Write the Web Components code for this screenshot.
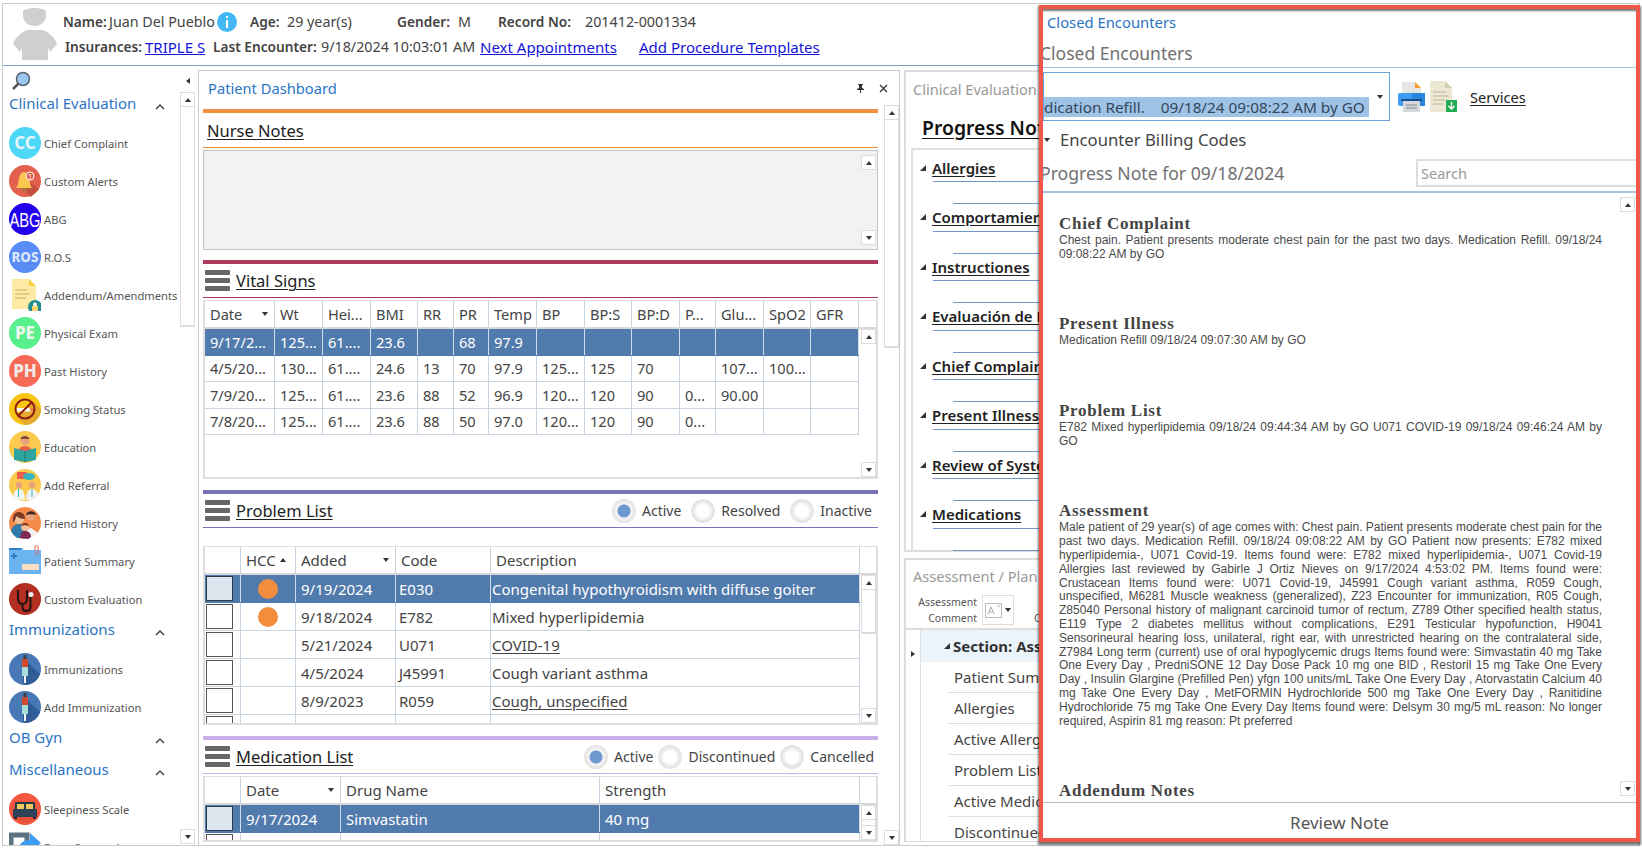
<!DOCTYPE html>
<html>
<head>
<meta charset="utf-8">
<title>Patient Dashboard</title>
<style>
  html, body { margin: 0; height: 848px; overflow: hidden; background: #fff; }
  body { font-family: "Noto Sans", sans-serif; color: #444; }
  svg { display: block; }
</style>
</head>
<body>

<app-shell>
  <patient-header slot="top"></patient-header>

  <side-nav slot="side">
    <nav-group>Clinical Evaluation</nav-group>
    <nav-item>Chief Complaint<svg slot="icon" viewBox="0 0 32 32"><circle cx="16" cy="16" r="16" fill="#4dd8f7"/><text x="16" y="22" text-anchor="middle" font-family="Noto Sans" font-weight="700" font-size="17" fill="#e8f4f6">CC</text></svg></nav-item>
    <nav-item>Custom Alerts<svg slot="icon" viewBox="0 0 32 32"><circle cx="16" cy="16" r="16" fill="#e2604d"/><path d="M16 26l6 6 8-8-8-6z" fill="#c4503f"/><path d="M7 23c2-2 2-5 3-10 1-4 3-6 5-6s4 2 5 6c1 5 1 8 3 10z" fill="#fcc750"/><rect x="13" y="23" width="5" height="3" fill="#a9793a"/><circle cx="21" cy="11" r="4" fill="#e2604d" stroke="#fff"/><text x="21" y="13.500" text-anchor="middle" font-size="7" font-family="Noto Sans" fill="#fff">1</text></svg></nav-item>
    <nav-item>ABG<svg slot="icon" viewBox="0 0 32 32"><circle cx="16" cy="16" r="16" fill="#2200ee"/><text x="16" y="24" text-anchor="middle" font-family="Liberation Sans" font-size="21" textLength="31" lengthAdjust="spacingAndGlyphs" fill="#fff">ABG</text></svg></nav-item>
    <nav-item>R.O.S<svg slot="icon" viewBox="0 0 32 32"><circle cx="16" cy="16" r="16" fill="#5a8cf7"/><text x="16" y="21" text-anchor="middle" font-family="Noto Sans" font-weight="800" font-size="13.500" textLength="27" lengthAdjust="spacingAndGlyphs" fill="#d9e6f5">ROS</text></svg></nav-item>
    <nav-item>Addendum/Amendments<svg slot="icon" viewBox="0 0 32 32"><path d="M3 0h17l7 7v23H3z" fill="#fdeba5"/><path d="M20 0l7 7h-7z" fill="#f9cf45"/><path d="M6 11h12M6 15h15M6 19h11" stroke="#c9b063" stroke-width="1.200"/><circle cx="26" cy="28" r="7" fill="#1f8e8c"/><rect x="23" y="27" width="6" height="7" fill="#f8d36a"/><circle cx="26" cy="25.500" r="2" fill="#fff"/></svg></nav-item>
    <nav-item>Physical Exam<svg slot="icon" viewBox="0 0 32 32"><circle cx="16" cy="16" r="16" fill="#58f08c"/><text x="16" y="22" text-anchor="middle" font-family="Noto Sans" font-weight="800" font-size="17" fill="#eaf6ee">PE</text></svg></nav-item>
    <nav-item>Past History<svg slot="icon" viewBox="0 0 32 32"><circle cx="16" cy="16" r="16" fill="#f76a55"/><text x="16" y="22" text-anchor="middle" font-family="Noto Sans" font-weight="800" font-size="17" fill="#f3e9e6">PH</text></svg></nav-item>
    <nav-item>Smoking Status<svg slot="icon" viewBox="0 0 32 32"><circle cx="16" cy="16" r="16" fill="#f9c513"/><path d="M7 24L24 8l8 8A16 16 0 0 1 16 32z" fill="#e5a92c"/><rect x="6" y="15" width="19" height="3.500" fill="#fff"/><rect x="21" y="15" width="4" height="3.500" fill="#e9893a"/><circle cx="16" cy="16" r="9.500" fill="none" stroke="#8c1c12" stroke-width="2"/><path d="M9 23L23 9" stroke="#8c1c12" stroke-width="2"/></svg></nav-item>
    <nav-item>Education<svg slot="icon" viewBox="0 0 32 32"><circle cx="16" cy="16" r="16" fill="#fbc94e"/><circle cx="16" cy="9.500" r="4.500" fill="#e9a27c"/><path d="M11.500 8c1-4 8-4 9 0z" fill="#7a4a36"/><path d="M7 28c0-9 4-13 9-13s9 4 9 13z" fill="#e8604c"/><path d="M5 17l11 3 11-3v12l-11 2-11-2z" fill="#2fa39d"/><path d="M16 20v11" stroke="#1e7c78"/></svg></nav-item>
    <nav-item>Add Referral<svg slot="icon" viewBox="0 0 32 32"><circle cx="16" cy="16" r="16" fill="#fbc94e"/><rect x="8" y="3" width="10" height="7" rx="1" fill="#e8604c"/><ellipse cx="20" cy="7.500" rx="6" ry="3.500" fill="#36b5c0"/><circle cx="10" cy="16" r="3.200" fill="#e9a27c"/><circle cx="23" cy="16" r="3.200" fill="#e9a27c"/><path d="M4 30c0-7 3-10 6-10s6 3 6 11zM17 31c0-8 3-11 6-11s6 3 6 7l-4 4z" fill="#f1f4f4"/><path d="M9.500 20v8M23 20v8" stroke="#36b5c0"/></svg></nav-item>
    <nav-item>Friend History<svg slot="icon" viewBox="0 0 32 32"><circle cx="16" cy="16" r="16" fill="#f58a4b"/><path d="M16 32c5 0 10-2 13-6l-7-5-6 2z" fill="#f2f2f2"/><path d="M2 24c1-5 5-7 8-7s7 2 8 7v7H8a16 16 0 0 1-6-7z" fill="#2f7cab"/><circle cx="10" cy="12" r="5" fill="#f1bf9a"/><path d="M4 15c-1-8 3-10 6-10s6 2 6 7c-3 0-7-1-9-3 0 3-1 5-3 6z" fill="#7d3a22"/><circle cx="22" cy="9" r="4.500" fill="#e9a27c"/><path d="M17 8c1-5 9-5 10 0-3-1-7-1-10 0z" fill="#3b2a28"/><path d="M11 31c0-5 2-7 5-7s6 2 6 6l-3 2z" fill="#7d2a57"/><circle cx="16" cy="20" r="4" fill="#f1bf9a"/><path d="M12 19c0-4 8-4 8 0-3-1-5-1-8 0z" fill="#7d3a22"/></svg></nav-item>
    <nav-item>Patient Summary<svg slot="icon" viewBox="0 0 32 32"><path d="M0 3h14v2h18v24H0z" fill="#6cb4ef"/><path d="M0 3h12v2H0z" fill="#2f7fc6"/><path d="M5 8v6M2 11h6" stroke="#2f7fc6" stroke-width="2"/><rect x="13" y="19" width="17" height="6" fill="#f8ddc0"/><path d="M26 6V2a1.500 1.500 0 0 1 3 0v6a1.500 1.500 0 0 1-3 0" fill="none" stroke="#e8604c"/></svg></nav-item>
    <nav-item>Custom Evaluation<svg slot="icon" viewBox="0 0 32 32"><circle cx="16" cy="16" r="16" fill="#b22f22"/><path d="M9 7v8c0 4 2 6 4.500 6S18 19 18 15V7" fill="none" stroke="#1f1413" stroke-width="2"/><path d="M13.500 21v3c0 3 2 4 4 4s4-1 4-4V14" fill="none" stroke="#1f1413" stroke-width="2"/><circle cx="22" cy="11.500" r="2.500" fill="#eee"/></svg></nav-item>
    <nav-group>Immunizations</nav-group>
    <nav-item>Immunizations<svg slot="icon" viewBox="0 0 32 32"><circle cx="16" cy="16" r="16" fill="#4878b6"/><path d="M14 5L31 21A16 16 0 0 1 17 32l-3-1z" fill="#2f5c96"/><rect x="14.500" y="2" width="3" height="4" fill="#39403f"/><rect x="13" y="6" width="6" height="8" fill="#d2482f"/><rect x="13" y="14" width="6" height="9" fill="#a9dcd8"/><rect x="15" y="23" width="2" height="7" fill="#f4f4f4"/></svg></nav-item>
    <nav-item>Add Immunization<svg slot="icon" viewBox="0 0 32 32"><circle cx="16" cy="16" r="16" fill="#4878b6"/><path d="M14 5L31 21A16 16 0 0 1 17 32l-3-1z" fill="#2f5c96"/><rect x="14.500" y="2" width="3" height="4" fill="#39403f"/><rect x="13" y="6" width="6" height="8" fill="#d2482f"/><rect x="13" y="14" width="6" height="9" fill="#a9dcd8"/><rect x="15" y="23" width="2" height="7" fill="#f4f4f4"/></svg></nav-item>
    <nav-group>OB Gyn</nav-group>
    <nav-group>Miscellaneous</nav-group>
    <nav-item>Sleepiness Scale<svg slot="icon" viewBox="0 0 32 32"><circle cx="16" cy="16" r="16" fill="#f4593f"/><path d="M1 19h30A16 16 0 0 1 1 19z" fill="#e8503a"/><rect x="6" y="9" width="20" height="9" rx="1" fill="#28394a"/><rect x="8" y="11" width="7" height="5" fill="#f2c75c"/><rect x="17" y="11" width="7" height="5" fill="#f2c75c"/><rect x="4" y="16" width="24" height="8" fill="#2d4257"/><path d="M5 24h3v2H5zM24 24h3v2h-3z" fill="#1b2833"/></svg></nav-item>
    <nav-item>Form Scanned<svg slot="icon" viewBox="0 0 32 32"><rect x="2" y="4" width="16" height="26" fill="none" stroke="#5b7380" stroke-width="5"/><path d="M9 18c2-7 7-9 12-9V2l11 10-11 10v-7c-5 0-8 0-12 3z" fill="#3d9cf5"/></svg></nav-item>
  </side-nav>

  <dash-panel slot="dash">
    <dash-section color="#f4913f" gap="10" headh="35">
      <span slot="title">Nurse Notes</span>
      <note-box></note-box>
    </dash-section>
    <dash-section color="#ae3a5c" menu gap="11">
      <span slot="title">Vital Signs</span>
      <data-grid style="height:179px;font-size:14.600px" cols="70,48,48,47,36,35,48,48,47,48,36,48,47,48" head="Date ▾|Wt|Hei...|BMI|RR|PR|Temp|BP|BP:S|BP:D|P...|Glu...|SpO2|GFR" thumb="0"
        rows="9/17/2...|125...|61....|23.6||68|97.9|||||||;4/5/20...|130...|61....|24.6|13|70|97.9|125...|125|70||107...|100...|;7/9/20...|125...|61....|23.6|88|52|96.9|120...|120|90|0...|90.00||;7/8/20...|125...|61....|23.6|88|50|97.0|120...|120|90|0...|||"></data-grid>
    </dash-section>
    <dash-section color="#7872b8" menu gap="11" drop="18">
      <span slot="title">Problem List</span>
      <radio-set slot="tools" style="--gap:10px" options="Active|Resolved|Inactive"></radio-set>
      <data-grid style="height:179px;font-size:15px" check tight cols="36,55,100,95,369" rowh="28" head="|HCC ▴|Added ▾|Code|Description" thumb="44"
        rows="|@|9/19/2024|E030|Congenital hypothyroidism with diffuse goiter;|@|9/18/2024|E782|Mixed hyperlipidemia;||5/21/2024|U071|_COVID-19;||4/5/2024|J45991|Cough variant asthma;||8/9/2023|R059|_Cough, unspecified;||5/11/2023|M6281|Muscle weakness (generalized)"></data-grid>
    </dash-section>
    <dash-section color="#c9afe8" menu gap="0">
      <span slot="title">Medication List</span>
      <radio-set slot="tools" style="--gap:5px;margin-right:-2px" options="Active|Discontinued|Cancelled"></radio-set>
      <data-grid style="height:66px;font-size:15px" check cols="36,100,259,260" rowh="28" head="|Date ▾|Drug Name|Strength" thumb="60"
        rows="|9/17/2024|Simvastatin|40 mg;|4/5/2024|Insulin Glargine (Prefilled Pen)|yfgn 100 units/mL"></data-grid>
    </dash-section>
  </dash-panel>

  <clinical-panel slot="clinical"></clinical-panel>
  <assess-panel slot="assess"></assess-panel>

  <encounter-popup slot="popup">
    <note-block><span slot="title">Chief Complaint</span>Chest pain. Patient presents moderate chest pain for the past two days. Medication Refill. 09/18/24 09:08:22 AM by GO</note-block>
    <note-block><span slot="title">Present Illness</span>Medication Refill 09/18/24 09:07:30 AM by GO</note-block>
    <note-block><span slot="title">Problem List</span>E782 Mixed hyperlipidemia 09/18/24 09:44:34 AM by GO U071 COVID-19 09/18/24 09:46:24 AM by GO</note-block>
    <note-block><span slot="title">Assessment</span>Male patient of 29 year(s) of age comes with: Chest pain. Patient presents moderate chest pain for the past two days. Medication Refill. 09/18/24 09:08:22 AM by GO Patient now presents: E782 mixed hyperlipidemia-, U071 Covid-19. Items found were: E782 mixed hyperlipidemia-, U071 Covid-19 Allergies last reviewed by Gabirle J Ortiz Nieves on 9/17/2024 4:53:02 PM. Items found were: Crustacean Items found were: U071 Covid-19, J45991 Cough variant asthma, R059 Cough, unspecified, M6281 Muscle weakness (generalized), Z23 Encounter for immunization, R05 Cough, Z85040 Personal history of malignant carcinoid tumor of rectum, Z789 Other specified health status, E119 Type 2 diabetes mellitus without complications, E291 Testicular hypofunction, H9041 Sensorineural hearing loss, unilateral, right ear, with unrestricted hearing on the contralateral side, Z7984 Long term (current) use of oral hypoglycemic drugs Items found were: Simvastatin 40 mg Take One Every Day , PredniSONE 12 Day Dose Pack 10 mg one BID , Restoril 15 mg Take One Every Day , Insulin Glargine (Prefilled Pen) yfgn 100 units/mL Take One Every Day , Atorvastatin Calcium 40 mg Take One Every Day , MetFORMIN Hydrochloride 500 mg Take One Every Day , Ranitidine Hydrochloride 75 mg Take One Every Day Items found were: Delsym 30 mg/5 mL reason: No longer required, Aspirin 81 mg reason: Pt preferred</note-block>
    <note-block><span slot="title">Addendum Notes</span></note-block>
  </encounter-popup>
</app-shell>

<script>
  const svgTri = (d, size = 8) => {
    let paths = { up: 'M1 6l3-4 3 4z', down: 'M1 2l3 4 3-4z', left: 'M6 1L2 4l4 3z', right: 'M2 1l4 3-4 3z', corner: 'M7 1v6H1z' }
    return `<svg width="${size}" height="${size}" viewBox="0 0 8 8"><path d="${paths[d]}" fill="#333"/></svg>`
  }

  customElements.define('scroll-bar', class ScrollBar extends HTMLElement {
    constructor () {
      super()
      let thumb = this.getAttribute('thumb') || 0
      this.attachShadow({ mode: 'open' }).innerHTML = `
        <style>
          :host { display: flex; flex-direction: column; width: 15px; flex: none; background: #fff; }
          .btn { height: 15px; flex: none; display: flex; align-items: center; justify-content: center; border: 1px solid #ddd; box-sizing: border-box; background: #fff; }
          .track { flex: 1; min-height: 0; }
          .thumb { box-sizing: border-box; border: 1px solid #ddd; border-top: 0; border-bottom-width: 2px; background: #fff; height: ${thumb}px; display: ${thumb > 0 ? 'block' : 'none'}; }
        </style>
        <div class="btn">${svgTri('up')}</div>
        <div class="track"><div class="thumb"></div></div>
        <div class="btn">${svgTri('down')}</div>`
    }
  })

  customElements.define('app-shell', class AppShell extends HTMLElement {
    constructor () {
      super()
      this.attachShadow({ mode: 'open' }).innerHTML = `
        <style>
          :host { display: block; position: relative; width: 1642px; height: 848px; overflow: hidden; }
          .frame { box-sizing: border-box; margin: 3px 0 0 2px; width: 1638px; height: 843px; border: 1px solid #ccc; display: flex; flex-direction: column; }
          .main { flex: 1; min-height: 0; display: grid; grid-template-columns: 195px 702px 139px; grid-template-rows: 482px 1fr; padding-top: 4px; }
          .side { grid-row: 1 / 3; min-height: 0; overflow: hidden; }
          .dash { grid-row: 1 / 3; min-height: 0; overflow: hidden; display: flex; }
          .clin { margin-left: 4px; min-height: 0; overflow: hidden; display: flex; }
          .asse { margin: 6px 0 3px 4px; min-height: 0; overflow: hidden; display: flex; }
          ::slotted([slot=popup]) { position: absolute; left: 1039px; top: 5px; }
        </style>
        <div class="frame">
          <slot name="top"></slot>
          <div class="main">
            <div class="side"><slot name="side"></slot></div>
            <div class="dash"><slot name="dash"></slot></div>
            <div class="clin"><slot name="clinical"></slot></div>
            <div class="asse"><slot name="assess"></slot></div>
          </div>
        </div>
        <slot name="popup"></slot>`
    }
  })

  customElements.define('patient-header', class PatientHeader extends HTMLElement {
    constructor () {
      super()
      this.attachShadow({ mode: 'open' }).innerHTML = `
        <style>
          :host { display: flex; height: 61px; border-bottom: 1px solid #7ba1cf; font-size: 14.300px; color: #444; }
          .avatar { width: 46px; height: 52px; margin: 4px 0 0 9px; flex: none; }
          .lines { margin-left: 5px; padding-top: 5px; }
          .line { display: flex; height: 25px; align-items: center; white-space: nowrap; }
          b { font-weight: 600; color: #444; font-size: 13.700px; flex: none; }
          a { color: #1414d8; text-decoration: underline; font-size: 15px; flex: none; }
          span { flex: none; }
          .info { width: 20px; height: 20px; margin: 0 13px 0 1px; flex: none; }
        </style>
        <svg class="avatar" viewBox="0 0 46 52">
          <path d="M11 3c4-4 19-4 23 0v5c0 5-5 10-11.500 10S11 13 11 8z" fill="#cfcfcf"/>
          <path d="M1 36C3 30 8 25 15 22h16c7 3 12 8 14 14l-7 8-2-4v12H10V40l-2 4z" fill="#cfcfcf"/>
        </svg>
        <div class="lines">
          <div class="line">
            <b style="width:46px">Name:</b><span style="width:107px">Juan Del Pueblo</span>
            <svg class="info" viewBox="0 0 20 20"><circle cx="10" cy="10" r="10" fill="#43b8f4"/><rect x="9" y="8" width="2" height="8" fill="#fff"/><rect x="9" y="4" width="2" height="2" fill="#fff"/></svg>
            <b style="width:37px">Age:</b><span style="width:110px">29 year(s)</span>
            <b style="width:61px">Gender:</b><span style="width:40px">M</span>
            <b style="width:87px">Record No:</b><span>201412-0001334</span>
          </div>
          <div class="line" style="margin-left:2px">
            <b style="width:80px">Insurances:</b><a style="width:68px">TRIPLE S</a>
            <b style="width:108px">Last Encounter:</b><span style="width:159px">9/18/2024 10:03:01 AM</span>
            <a style="width:159px">Next Appointments</a><a>Add Procedure Templates</a>
          </div>
        </div>`
    }
  })

  customElements.define('nav-group', class NavGroup extends HTMLElement {
    constructor () {
      super()
      this.attachShadow({ mode: 'open' }).innerHTML = `
        <style>
          :host { display: flex; height: 32px; box-sizing: border-box; padding: 0 0 10px 6px; align-items: center; font-size: 15px; color: #2a74c4; }
          span { flex: 1; }
          svg { margin: 6px 15px 0 0; }
        </style>
        <span><slot></slot></span>
        <svg width="10" height="7" viewBox="0 0 10 7"><path d="M1 6l4-4 4 4" fill="none" stroke="#444" stroke-width="1.500"/></svg>`
    }
  })

  customElements.define('nav-item', class NavItem extends HTMLElement {
    constructor () {
      super()
      this.attachShadow({ mode: 'open' }).innerHTML = `
        <style>
          :host { display: flex; height: 38px; align-items: center; padding-left: 6px; font-size: 11.200px; color: #555; white-space: nowrap; }
          .icon { width: 32px; height: 32px; margin-right: 3px; flex: none; }
          ::slotted(svg) { width: 32px; height: 32px; display: block; }
        </style>
        <div class="icon"><slot name="icon"></slot></div>
        <slot></slot>`
    }
  })

  customElements.define('side-nav', class SideNav extends HTMLElement {
    constructor () {
      super()
      this.attachShadow({ mode: 'open' }).innerHTML = `
        <style>
          :host { display: flex; flex-direction: column; height: 100%; }
          .top { height: 22px; flex: none; display: flex; align-items: center; justify-content: space-between; padding: 0 6px 0 8px; }
          .body { flex: 1; min-height: 0; display: flex; }
          .list { width: 177px; overflow: hidden; flex: none; }
          scroll-bar { margin-bottom: 1px; }
        </style>
        <div class="top">
          <svg width="20" height="20" viewBox="0 0 20 20"><path d="M2 18l6-6" stroke="#555" stroke-width="2.500"/><circle cx="12" cy="8" r="6.500" fill="#9cc6f2" stroke="#56636e" stroke-width="1.500"/></svg>
          ${svgTri('left')}
        </div>
        <div class="body">
          <div class="list"><slot></slot></div>
          <scroll-bar thumb="220"></scroll-bar>
        </div>`
    }
  })

  customElements.define('dash-panel', class DashPanel extends HTMLElement {
    constructor () {
      super()
      this.attachShadow({ mode: 'open' }).innerHTML = `
        <style>
          :host { flex: 1; display: flex; flex-direction: column; box-sizing: border-box; border: 1px solid #ccc; border-bottom: 0; min-width: 0; }
          .title { height: 34px; flex: none; display: flex; align-items: center; padding: 0 11px 0 9px; font-size: 14.700px; color: #2a74c4; }
          .title span { flex: 1; }
          .pin { margin-right: 14px; }
          .body { flex: 1; min-height: 0; display: flex; }
          .content { width: 675px; flex: none; margin-left: 4px; padding-top: 4px; overflow: hidden; }
          scroll-bar { margin-left: 6px; }
        </style>
        <div class="title">
          <span>Patient Dashboard</span>
          <svg class="pin" width="9" height="10" viewBox="0 0 9 10"><path d="M2 1h5v1H6v3l2 1v1H1V6l2-1V2H2zM4 7h1v3H4z" fill="#333"/></svg>
          <svg width="9" height="9" viewBox="0 0 9 9"><path d="M1 1l7 7M8 1L1 8" stroke="#333" stroke-width="1.300"/></svg>
        </div>
        <div class="body">
          <div class="content"><slot></slot></div>
          <scroll-bar thumb="228"></scroll-bar>
        </div>`
    }
  })

  customElements.define('dash-section', class DashSection extends HTMLElement {
    constructor () {
      super()
      let color = this.getAttribute('color')
      let gap = this.getAttribute('gap') || 0
      let drop = this.getAttribute('drop') || 2
      let headh = this.getAttribute('headh') || 34
      let menu = this.hasAttribute('menu')
      this.attachShadow({ mode: 'open' }).innerHTML = `
        <style>
          :host { display: block; margin-bottom: ${gap}px; }
          .bar { height: 4px; background: ${color}; }
          .head { height: ${headh}px; box-sizing: border-box; border-bottom: 1px solid ${color}; display: flex; align-items: center; padding: 0 6px 0 ${menu ? 2 : 4}px; font-size: 16.500px; color: #222; }
          .name { flex: 1; text-decoration: underline; text-underline-offset: 2px; text-decoration-thickness: 1px; }
          .menu { display: ${menu ? 'flex' : 'none'}; flex-direction: column; gap: 3px; width: 25px; margin-right: 6px; }
          .menu i { height: 5px; background: #666; border-radius: 1px; }
          .body { padding-top: ${drop}px; }
        </style>
        <div class="bar"></div>
        <div class="head">
          <div class="menu"><i></i><i></i><i></i></div>
          <div class="name"><slot name="title"></slot></div>
          <slot name="tools"></slot>
        </div>
        <div class="body"><slot></slot></div>`
    }
  })

  customElements.define('note-box', class NoteBox extends HTMLElement {
    constructor () {
      super()
      this.attachShadow({ mode: 'open' }).innerHTML = `
        <style>
          :host { display: flex; height: 100px; box-sizing: border-box; border: 1px solid #c4c4c4; background: #f2f2f2; justify-content: flex-end; }
          scroll-bar { margin: 4px 1px 4px 0; background: #f2f2f2; }
        </style>
        <scroll-bar></scroll-bar>`
    }
  })

  customElements.define('radio-set', class RadioSet extends HTMLElement {
    constructor () {
      super()
      let options = this.getAttribute('options').split('|')
      let items = options.map((o, i) => `<div class="opt"><i class="${i ? '' : 'on'}"></i><span>${o}</span></div>`).join('')
      this.attachShadow({ mode: 'open' }).innerHTML = `
        <style>
          :host { display: flex; align-items: center; gap: var(--gap, 12px); font-size: 14px; color: #444; }
          .opt { display: flex; align-items: center; gap: 6px; }
          i { width: 24px; height: 24px; border-radius: 50%; display: block; background: radial-gradient(circle, #fff 0 6px, #f1f1f1 8px, #e2e2e2 11px, #e9e9e9 12px); }
          i.on { background: radial-gradient(circle, #6c97cf 0 6px, #f6f6f6 7px, #ededed 9px, #e0e0e0 12px); }
        </style>
        ${items}`
    }
  })

  customElements.define('data-grid', class DataGrid extends HTMLElement {
    constructor () {
      super()
      let cols = this.getAttribute('cols').split(',').map(n => n + 'px').join(' ')
      let rowh = this.getAttribute('rowh') || 26.5
      let check = this.hasAttribute('check')
      let tight = this.hasAttribute('tight')
      let head = this.getAttribute('head').split('|')
      let rows = this.getAttribute('rows').split(';').map(r => r.split('|'))
      const cell = (text, c) => {
        if (check && c === 0) return `<div class="c box"><i></i></div>`
        if (text === '@') return `<div class="c dot"><i></i></div>`
        if (text[0] === '_') return `<div class="c"><u>${text.slice(1)}</u></div>`
        return `<div class="c">${text}</div>`
      }
      const th = text => {
        let m = text.match(/^(.*) ([▾▴])$/)
        if (!m) return `<div class="c">${text}</div>`
        return `<div class="c sort ${m[2] === '▴' ? 'tight' : ''}"><span>${m[1]}</span>${svgTri(m[2] === '▾' ? 'down' : 'up')}</div>`
      }
      this.attachShadow({ mode: 'open' }).innerHTML = `
        <style>
          :host { display: flex; flex-direction: column; box-sizing: border-box; border: 2px solid #dedede; border-top-width: 1px; overflow: hidden; color: #444; }
          .head { height: 26px; flex: none; display: grid; grid-template-columns: ${cols}; border-bottom: 2px solid #d8d8d8; }
          .head .c { border-right: 1px solid #c9d4e2; }
          .body { flex: 1; min-height: 0; display: flex; justify-content: space-between; }
          .rows { overflow: hidden; }
          .row { height: ${rowh}px; box-sizing: border-box; display: grid; grid-template-columns: ${cols}; border-bottom: 1px solid #c9d4e2; }
          .row.sel { background: #527bad; color: #fff; border-bottom-color: #527bad; }
          .c { padding-left: 5px; border-right: 1px solid #c9d4e2; white-space: nowrap; overflow: hidden; display: flex; align-items: center; min-width: 0; box-sizing: border-box; }
          .row.sel .c { border-right-color: #d3dce8; }
          ${tight ? '.row .c:nth-child(4) { padding-left: 3px; } .row .c:nth-child(5) { padding-left: 1px; }' : ''}
          .sort span { flex: 1; }
          .sort svg { margin-right: 5px; flex: none; }
          .sort.tight span { flex: none; margin-right: 3px; }
          .dot { justify-content: center; padding: 0; }
          .dot i { width: 20px; height: 20px; border-radius: 50%; background: #f28d3e; }
          .c.box { padding: 0; }
          .box i { display: block; height: 25px; box-sizing: border-box; border: 1px solid #555; margin: 0 0 0 1px; background: #fff; flex: none; width: 27px; }
          .sel .box i { background: #dde5ee; border-color: #2c3a4c; }
          u { text-underline-offset: 2px; }
        </style>
        <div class="head">${head.map(th).join('')}</div>
        <div class="body">
          <div class="rows">${rows.map((r, i) => `<div class="row ${i ? '' : 'sel'}">${r.map(cell).join('')}</div>`).join('')}</div>
          <scroll-bar thumb="${this.getAttribute('thumb') || 0}"></scroll-bar>
        </div>`
    }
  })

  customElements.define('clinical-panel', class ClinicalPanel extends HTMLElement {
    constructor () {
      super()
      let names = ['Allergies', 'Comportamiento', 'Instructiones', 'Evaluación de Riesgo', 'Chief Complaint', 'Present Illness', 'Review of Systems', 'Medications']
      this.attachShadow({ mode: 'open' }).innerHTML = `
        <style>
          :host { flex: none; width: 400px; display: flex; flex-direction: column; box-sizing: border-box; border: 2px solid #ddd; }
          .title { height: 34px; display: flex; align-items: center; padding-left: 7px; font-size: 14.600px; color: #999; flex: none; white-space: nowrap; }
          .big { height: 42px; flex: none; padding-left: 16px; font-size: 19.400px; font-weight: 600; color: #111; display: flex; align-items: center; white-space: nowrap; }
          .big u { text-underline-offset: 3px; }
          .box { flex: 1; margin: 0 6px 6px 5px; border: 2px solid #e0e0e0; border-bottom-width: 1px; padding-top: 6px; }
          .sec { height: 49.500px; }
          .name { height: 23px; display: flex; align-items: center; font-size: 15px; font-weight: 600; color: #222; white-space: nowrap; }
          .name svg { margin: 0 5px 0 6px; flex: none; }
          .name u { text-underline-offset: 2px; }
          .l1 { margin-left: 20px; border-top: 1px solid #6f97c8; margin-top: 2px; }
          .l2 { margin-left: 40px; border-top: 1px solid #6f97c8; margin-top: 21px; }
        </style>
        <div class="title">Clinical Evaluation</div>
        <div class="big"><u>Progress Note</u></div>
        <div class="box">
          ${names.map(n => `<div class="sec"><div class="name">${svgTri('corner')}<u>${n}</u></div><div class="l1"></div><div class="l2"></div></div>`).join('')}
        </div>`
    }
  })

  customElements.define('assess-panel', class AssessPanel extends HTMLElement {
    constructor () {
      super()
      let rows = ['Patient Summary', 'Allergies', 'Active Allergies', 'Problem List', 'Active Medications', 'Discontinued']
      this.attachShadow({ mode: 'open' }).innerHTML = `
        <style>
          :host { flex: none; width: 400px; display: flex; flex-direction: column; box-sizing: border-box; border: 2px solid #ddd; border-bottom-width: 1px; overflow: hidden; }
          .title { height: 32px; flex: none; display: flex; align-items: center; padding-left: 7px; font-size: 14.600px; color: #999; white-space: nowrap; }
          .bar { height: 36px; flex: none; display: flex; align-items: center; border-bottom: 2px solid #ddd; }
          .lab { width: 71px; text-align: right; font-size: 10.500px; line-height: 16px; color: #555; }
          .lab2 { width: 60px; margin-left: 20px; flex: none; }
          .drop { margin-left: 5px; width: 32px; height: 30px; box-sizing: border-box; border: 1px solid #ddd; display: flex; align-items: center; justify-content: center; gap: 2px; }
          .table { flex: 1; display: grid; grid-template-columns: 15px 1fr; min-height: 0; }
          .gut { border-right: 1px solid #ddd; padding: 11px 0 0 3px; }
          .sect { height: 32px; background: #ebf3fb; display: flex; align-items: center; padding-left: 22px; gap: 2px; font-size: 15px; font-weight: 700; color: #333; white-space: nowrap; }
          .r { height: 31px; box-sizing: border-box; margin-left: 28px; border-bottom: 1px solid #ddd; display: flex; align-items: center; padding-left: 5px; font-size: 15px; color: #444; white-space: nowrap; }
        </style>
        <div class="title">Assessment / Plan</div>
        <div class="bar">
          <div class="lab">Assessment<br>Comment</div>
          <div class="drop"><svg width="17" height="15" viewBox="0 0 17 15"><rect x=".5" y=".5" width="16" height="14" fill="#fff" stroke="#bbb"/><path d="M3 11l3-7 3 7M4 9h4" fill="none" stroke="#aaa"/><path d="M12 3h3" stroke="#aaa"/></svg>${svgTri('down')}</div>
          <div class="lab lab2" style="text-align:left"><br>Comment</div>
        </div>
        <div class="table">
          <div class="gut">${svgTri('right')}</div>
          <div>
            <div class="sect">${svgTri('corner')}<span>Section: Assessment</span></div>
            ${rows.map(r => `<div class="r">${r}</div>`).join('')}
          </div>
        </div>`
    }
  })

  customElements.define('note-block', class NoteBlock extends HTMLElement {
    constructor () {
      super()
      this.attachShadow({ mode: 'open' }).innerHTML = `
        <style>
          :host { display: block; margin-bottom: 52.800px; }
          h3 { margin: 0; font: 700 17px/20px "Liberation Serif", serif; letter-spacing: .7px; color: #444; }
          p { margin: 0; font: 12px/13.800px "Liberation Sans", sans-serif; color: #4a4a4a; text-align: justify; }
        </style>
        <h3><slot name="title"></slot></h3>
        <p><slot></slot></p>`
    }
  })

  customElements.define('encounter-popup', class EncounterPopup extends HTMLElement {
    constructor () {
      super()
      this.attachShadow({ mode: 'open' }).innerHTML = `
        <style>
          :host { display: flex; flex-direction: column; box-sizing: border-box; width: 601px; height: 837px; border: 4px solid #f2574b; background: #fff; overflow: hidden; box-shadow: 0 2px 2px 1px rgba(0,0,0,.55); font-size: 14px; color: #555; }
          .inner { flex: 1; min-height: 0; display: flex; flex-direction: column; box-shadow: inset 0 3px 2px -1px rgba(0,0,0,.55); padding-top: 3px; }
          .t1 { height: 20px; flex: none; display: flex; align-items: center; padding-left: 4px; color: #2a74c4; font-size: 14.800px; }
          .t2 { height: 35px; flex: none; box-sizing: border-box; display: flex; align-items: center; margin-left: -3px; font-size: 17.500px; color: #707070; padding-top: 7px; }
          .rule { height: 1px; background: #a9c4e2; flex: none; }
          .row { height: 49px; margin-top: 4px; flex: none; display: flex; align-items: center; }
          .combo { width: 347px; height: 49px; box-sizing: border-box; border: 1px solid #6aa4da; display: flex; align-items: flex-end; position: relative; flex: none; }
          .sel { width: 325px; height: 20px; margin-bottom: 3px; background: #9fc3e6; white-space: pre; font-size: 15.300px; color: #35475a; line-height: 20px; overflow: hidden; }
          .combo svg { position: absolute; right: 5px; top: 20px; }
          .print { margin-left: 8px; }
          .doc { margin-left: 4px; }
          .svc { margin-left: 12px; color: #222; text-decoration: underline; font-size: 14.600px; text-underline-offset: 2px; }
          .bill { height: 31px; flex: none; display: flex; align-items: center; font-size: 16.700px; color: #444; margin-top: 3px; }
          .prog { height: 36px; flex: none; display: flex; align-items: center; justify-content: space-between; }
          .prog span { font-size: 17.600px; color: #707070; margin-left: -3px; white-space: nowrap; }
          .search { width: 220px; height: 28px; box-sizing: border-box; border: 2px solid #ddd; border-right: 0; color: #999; display: flex; align-items: center; padding-left: 3px; font-size: 14.500px; }
          .rule2 { height: 2px; background: #a9c4e2; flex: none; }
          .body { flex: 1; min-height: 0; display: flex; }
          .notes { flex: 1; min-width: 0; padding: 21px 18px 0 16px; overflow: hidden; }
          scroll-bar { margin: 4px 1px 6px 0; }
          .foot { height: 36px; box-sizing: border-box; padding-top: 3px; flex: none; border-top: 1px solid #bbb; display: flex; align-items: center; justify-content: center; font-size: 17px; color: #555; }
        </style>
        <div class="inner">
          <div class="t1">Closed Encounters</div>
          <div class="t2">Closed Encounters</div>
          <div class="rule"></div>
          <div class="row">
            <div class="combo"><div class="sel">dication Refill.    09/18/24 09:08:22 AM by GO</div>${svgTri('down')}</div>
            <svg class="print" width="27" height="30" viewBox="0 0 27 30">
              <path d="M4 0h13l6 6v8H4z" fill="#e6e6e6"/><path d="M17 0l6 6h-6z" fill="#f59a24"/>
              <rect x="0" y="11" width="27" height="13" rx="2" fill="#3c9df2"/>
              <rect x="14" y="11" width="13" height="13" fill="#2a86dc"/>
              <rect x="3" y="17" width="21" height="2" fill="#16508c"/>
              <rect x="5" y="19" width="17" height="11" fill="#d4d8db"/><path d="M8 23h11M8 26h11" stroke="#7e8a94"/>
            </svg>
            <svg class="doc" width="29" height="31" viewBox="0 0 29 31">
              <path d="M1 0h15l7 7v24H1z" fill="#ece8d4"/><path d="M16 0l7 7h-7z" fill="#d4cfb4"/>
              <path d="M4 11h14M4 15h16M4 19h12M4 23h10" stroke="#b8b296"/>
              <rect x="17" y="19" width="11" height="12" fill="#22ad54"/><path d="M22.500 21v7M19.500 25l3 3 3-3" fill="none" stroke="#fff" stroke-width="1.400"/>
            </svg>
            <span class="svc">Services</span>
          </div>
          <div class="bill">${svgTri('down', 8)}<span style="margin-left:9px">Encounter Billing Codes</span></div>
          <div class="prog"><span>Progress Note for 09/18/2024</span><div class="search">Search</div></div>
          <div class="rule2"></div>
          <div class="body">
            <div class="notes"><slot></slot></div>
            <scroll-bar></scroll-bar>
          </div>
          <div class="foot">Review Note</div>
        </div>`
    }
  })
</script>
</body>
</html>
